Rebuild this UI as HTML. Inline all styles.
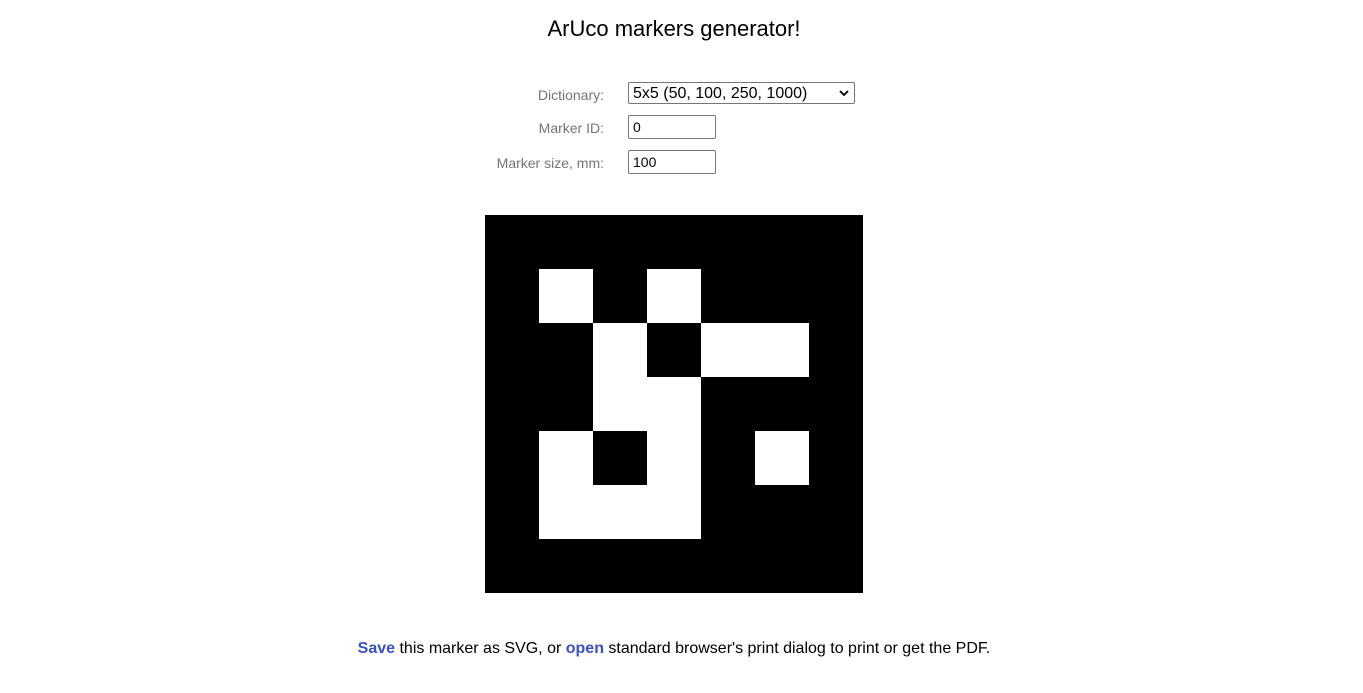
<!DOCTYPE html>
<html><head><style>
body{margin:0;width:1363px;height:693px;background:#fff;font-family:"Liberation Sans",Arial,sans-serif;position:relative;overflow:hidden}
.t{position:absolute;left:0;width:1348px;text-align:center;top:16px;font-size:22px;color:#000}
.l{position:absolute;right:759px;font-size:14px;color:#757575}
.box{position:absolute;left:628px;border:1px solid #767676;border-radius:2px;box-sizing:border-box;font-size:14px;padding:2px 4px;line-height:18px;color:#000;background:#fff}
.b{position:absolute;background:#fff}
.p{position:absolute;left:0;width:1348px;text-align:center;top:640px;font-size:16px}
.p b{color:#3a50c2}
</style></head><body>
<div class="t">ArUco markers generator!</div>
<div class="l" style="top:87px">Dictionary:</div>
<div class="l" style="top:120px">Marker ID:</div>
<div class="l" style="top:155px">Marker size, mm:</div>
<div class="box" style="top:82px;width:227px;height:22px;font-size:16px;padding:0 4px;line-height:22px">5x5 (50, 100, 250, 1000)<svg style="position:absolute;right:5px;top:7px" width="10" height="7" viewBox="0 0 10 7"><path d="M1 1l4 4 4-4" stroke="#000" stroke-width="1.8" fill="none"/></svg></div>
<div class="box" style="top:115px;width:88px;height:24px">0</div>
<div class="box" style="top:150px;width:88px;height:24px">100</div>
<div style="position:absolute;left:485px;top:215px;width:378px;height:378px;background:#000">
<div class="b" style="left:54px;top:54px;width:54px;height:54px"></div>
<div class="b" style="left:162px;top:54px;width:54px;height:54px"></div>
<div class="b" style="left:108px;top:108px;width:54px;height:108px"></div>
<div class="b" style="left:216px;top:108px;width:108px;height:54px"></div>
<div class="b" style="left:162px;top:162px;width:54px;height:162px"></div>
<div class="b" style="left:54px;top:216px;width:54px;height:108px"></div>
<div class="b" style="left:108px;top:270px;width:54px;height:54px"></div>
<div class="b" style="left:270px;top:216px;width:54px;height:54px"></div>
</div>
<div class="p"><b>Save</b> this marker as SVG, or <b>open</b> standard browser's print dialog to print or get the PDF.</div>
</body></html>
